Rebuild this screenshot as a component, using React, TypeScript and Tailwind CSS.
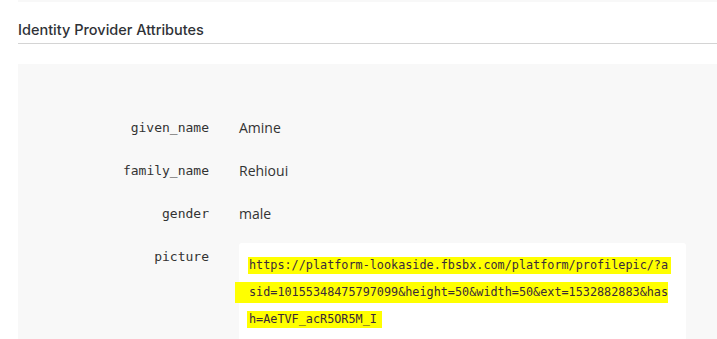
const attributes = [
  { name: 'given_name', value: 'Amine' },
  { name: 'family_name', value: 'Rehioui' },
  { name: 'gender', value: 'male' },
];

const pictureLines = [
  'https://platform-lookaside.fbsbx.com/platform/profilepic/?a',
  'sid=10155348475797099&height=50&width=50&ext=1532882883&has',
  'h=AeTVF_acR5OR5M_I',
];

const mono = "font-['DejaVu_Sans_Mono','Liberation_Mono',monospace]";

export default function App() {
  return (
    <div className="w-[717px] h-[339px] overflow-hidden bg-white pl-[18px] font-['Open_Sans','Noto_Sans',sans-serif] text-[#333]">
      <div className="h-[2px] bg-[#f8f8f8]" />

      {/* Section header */}
      <div className="pt-[18px] pb-[3px] border-b border-[#d4d4d4] mb-[20px]">
        <h2 className="text-[14.5px] leading-[20px] font-medium font-['Inter',sans-serif] text-[#2f3237]">
          Identity Provider Attributes
        </h2>
      </div>

      {/* Attributes panel */}
      <div className="bg-[#f8f8f8] pt-[42px] h-[300px]">
        {attributes.map((attr) => (
          <div key={attr.name} className="flex h-[43px]">
            <div className={`w-[191px] text-right pt-[11px] leading-[21px] text-[13px] ${mono}`}>
              {attr.name}
            </div>
            <div className="ml-[30px] pt-[11px] leading-[21px] text-[14px]">{attr.value}</div>
          </div>
        ))}

        <div className="flex">
          <div className={`w-[191px] text-right pt-[11px] leading-[21px] text-[13px] ${mono}`}>
            picture
          </div>
          <div className="ml-[30px] mt-[8px] w-[447px] bg-white rounded-[3px] pl-[10px] pt-[9px] pb-[20px]">
            {pictureLines.map((line, i) => (
              <div key={i} className="h-[27px] flex items-center">
                <span
                  className={`bg-[#ffff00] text-[11.8px] leading-[17px] text-[#3a2a3a] ${mono} ${
                    i === 1 ? 'pl-[14px] -ml-[14px] py-[2px]' : i === 2 ? 'pl-[2px] -ml-[2px] pr-[5px]' : 'pl-[1px] -ml-[1px] pr-[3px]'
                  }`}
                >
                  {line}
                </span>
              </div>
            ))}
          </div>
        </div>
      </div>
    </div>
  );
}
